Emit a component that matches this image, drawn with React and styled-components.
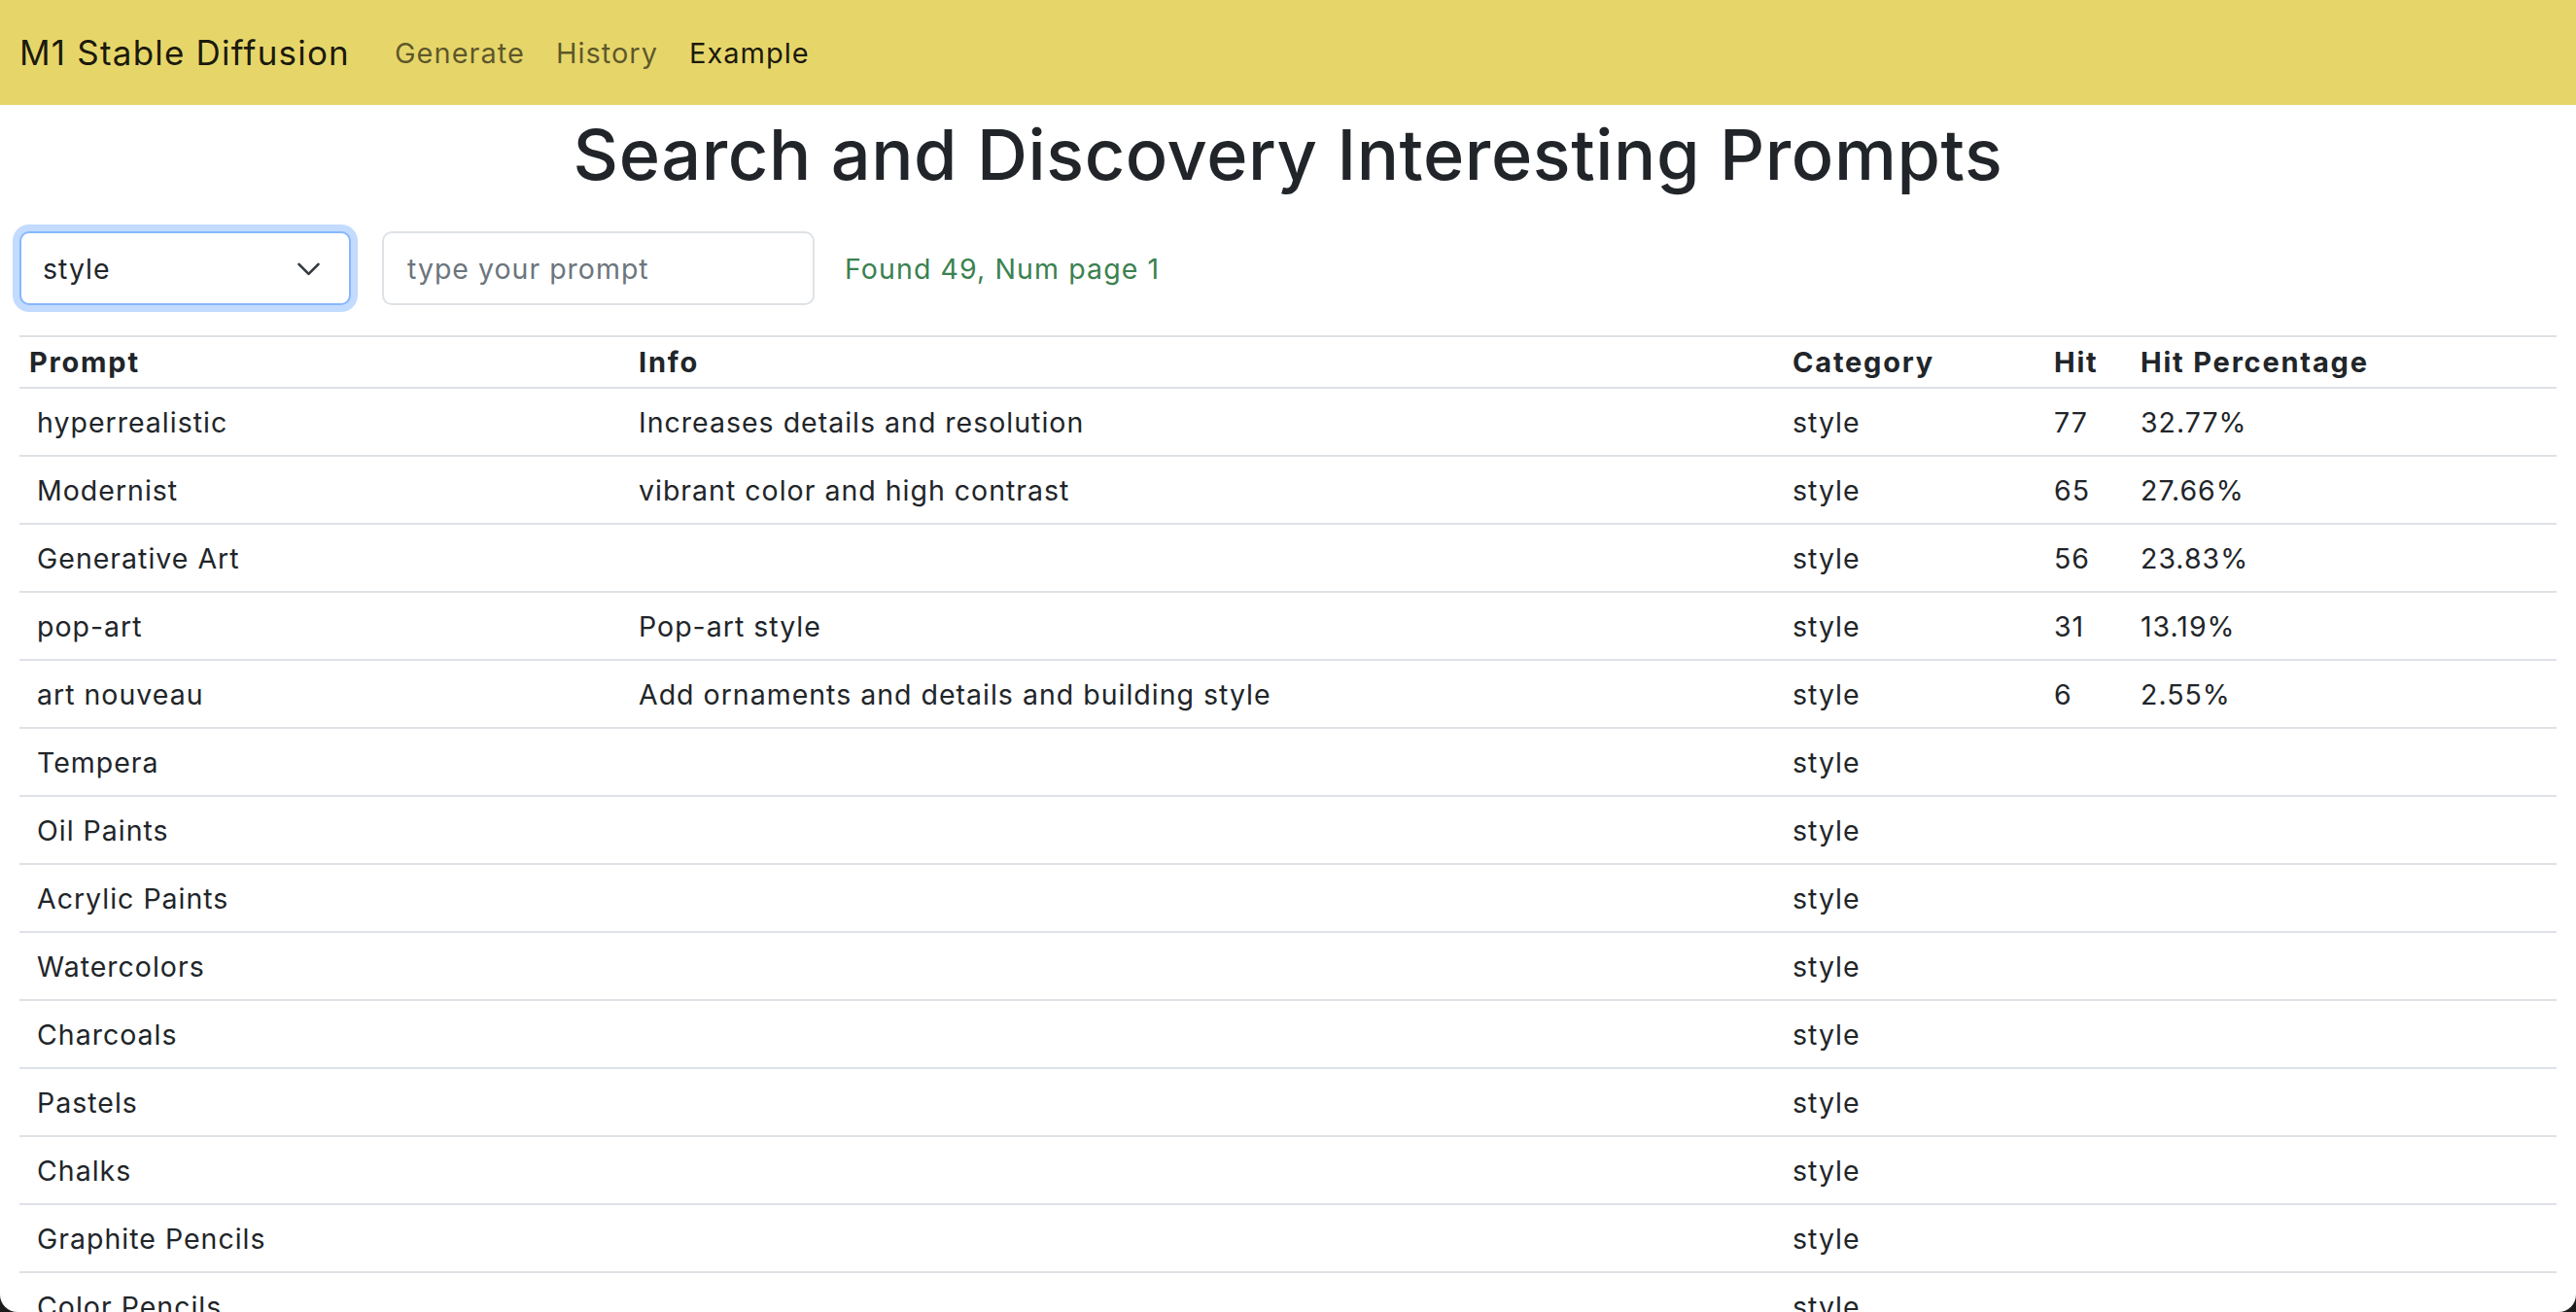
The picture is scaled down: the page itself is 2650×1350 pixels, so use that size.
import React, { useState } from "react";
import styled, { createGlobalStyle } from "styled-components";

const GlobalStyle = createGlobalStyle`
  html, body {
    margin: 0;
    padding: 0;
    background: #1c1c1e;
  }
  body {
    font-family: Inter, "Noto Sans", "Liberation Sans", sans-serif;
    color: #212529;
  }
`;

const Frame = styled.div`
  height: 100vh;
  overflow: hidden;
  background: #fff;
  border-radius: 0 0 18px 18px;
`;

const Navbar = styled.nav`
  display: flex;
  align-items: center;
  height: 108px;
  padding: 0 20px;
  background: #e6d66a;
`;

const Brand = styled.a`
  font-size: 35px;
  color: rgba(0, 0, 0, 0.9);
  margin-right: 30px;
  letter-spacing: 1.2px;
`;

const NavLink = styled.a`
  font-size: 29px;
  letter-spacing: 1px;
  padding: 0 16px;
  color: ${(p) => (p.active ? "rgba(0,0,0,0.9)" : "rgba(0,0,0,0.6)")};
`;

const Container = styled.main`
  padding: 0 20px;
`;

const Title = styled.h1`
  margin: 8px 0 36px;
  text-align: center;
  font-size: 72px;
  font-weight: 500;
  line-height: 1.2;
  letter-spacing: 0.6px;
`;

const Controls = styled.div`
  display: flex;
  align-items: center;
  height: 76px;
  margin-bottom: 31px;
`;

const SelectWrap = styled.div`
  position: relative;
  width: 341px;
  height: 76px;
  margin-right: 32px;
`;

const Select = styled.select`
  appearance: none;
  width: 100%;
  height: 100%;
  box-sizing: border-box;
  padding: 0 60px 0 22px;
  font-family: inherit;
  font-size: 28.5px;
  letter-spacing: 1px;
  color: #212529;
  background: #fff;
  border: 2px solid #86b7fe;
  border-radius: 10px;
  box-shadow: 0 0 0 7px rgba(13, 110, 253, 0.25);
  outline: none;
`;

const Chevron = styled.svg`
  position: absolute;
  right: 30px;
  top: 50%;
  transform: translateY(-50%);
  pointer-events: none;
`;

const Input = styled.input`
  width: 445px;
  height: 76px;
  box-sizing: border-box;
  padding: 0 24px;
  font-family: inherit;
  font-size: 28.5px;
  letter-spacing: 1px;
  color: #212529;
  border: 2px solid #dee2e6;
  border-radius: 10px;
  outline: none;
  margin-right: 31px;
  &::placeholder {
    color: #6c757d;
  }
`;

const Found = styled.span`
  font-size: 28.5px;
  letter-spacing: 1.1px;
  color: #3b8150;
`;

const Table = styled.table`
  width: 100%;
  border-collapse: collapse;
  table-layout: fixed;
  font-size: 28.5px;
  letter-spacing: 1px;
  border-top: 2px solid #dee2e6;
`;

const HeadCell = styled.th`
  box-sizing: border-box;
  width: ${(p) => p.w}px;
  height: 53px;
  padding: 0 10px;
  text-align: left;
  font-size: 29px;
  font-weight: 700;
  letter-spacing: 1.8px;
  border-bottom: 2px solid #dee2e6;
`;

const Row = styled.tr`
  border-bottom: 2px solid #dee2e6;
`;

const Cell = styled.td`
  box-sizing: border-box;
  height: 70px;
  padding: 0 10px 0 ${(p) => (p.first ? 18 : 10)}px;
  white-space: nowrap;
`;

const columns = [
  { key: "prompt", label: "Prompt", w: 627 },
  { key: "info", label: "Info", w: 1187 },
  { key: "category", label: "Category", w: 269 },
  { key: "hit", label: "Hit", w: 89 },
  { key: "pct", label: "Hit Percentage", w: 438 }
];

const rows = [
  ["hyperrealistic", "Increases details and resolution", "style", "77", "32.77%"],
  ["Modernist", "vibrant color and high contrast", "style", "65", "27.66%"],
  ["Generative Art", "", "style", "56", "23.83%"],
  ["pop-art", "Pop-art style", "style", "31", "13.19%"],
  ["art nouveau", "Add ornaments and details and building style", "style", "6", "2.55%"],
  ["Tempera", "", "style", "", ""],
  ["Oil Paints", "", "style", "", ""],
  ["Acrylic Paints", "", "style", "", ""],
  ["Watercolors", "", "style", "", ""],
  ["Charcoals", "", "style", "", ""],
  ["Pastels", "", "style", "", ""],
  ["Chalks", "", "style", "", ""],
  ["Graphite Pencils", "", "style", "", ""],
  ["Color Pencils", "", "style", "", ""],
  ["Pen and Ink", "", "style", "", ""],
  ["Crayons", "", "style", "", ""]
];

const App = () => {
  const [category, setCategory] = useState("style");
  const [query, setQuery] = useState("");

  return (
    <>
      <GlobalStyle />
      <Frame>
        <Navbar>
          <Brand>M1 Stable Diffusion</Brand>
          <NavLink>Generate</NavLink>
          <NavLink>History</NavLink>
          <NavLink active>Example</NavLink>
        </Navbar>
        <Container>
          <Title>Search and Discovery Interesting Prompts</Title>
          <Controls>
            <SelectWrap>
              <Select value={category} onChange={(e) => setCategory(e.target.value)}>
                <option value="style">style</option>
                <option value="artist">artist</option>
                <option value="medium">medium</option>
              </Select>
              <Chevron width="27" height="20" viewBox="0 0 16 12">
                <path
                  d="m2 3.5 6 6 6-6"
                  fill="none"
                  stroke="#343a40"
                  strokeWidth="1.6"
                  strokeLinecap="round"
                  strokeLinejoin="round"
                />
              </Chevron>
            </SelectWrap>
            <Input
              placeholder="type your prompt"
              value={query}
              onChange={(e) => setQuery(e.target.value)}
            />
            <Found>Found 49, Num page 1</Found>
          </Controls>
          <Table>
            <thead>
              <tr>
                {columns.map((c) => (
                  <HeadCell key={c.key} w={c.w}>
                    {c.label}
                  </HeadCell>
                ))}
              </tr>
            </thead>
            <tbody>
              {rows.map((r, i) => (
                <Row key={i}>
                  {r.map((v, j) => (
                    <Cell key={j} first={j === 0}>
                      {v}
                    </Cell>
                  ))}
                </Row>
              ))}
            </tbody>
          </Table>
        </Container>
      </Frame>
    </>
  );
};

export default App;
